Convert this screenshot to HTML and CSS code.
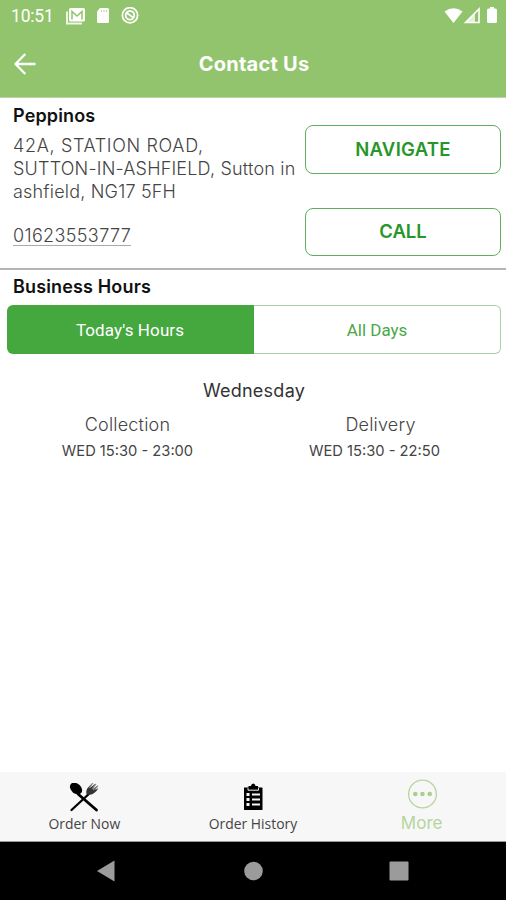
FILE: index.html
```html
<!DOCTYPE html>
<html lang="en">
<head>
<meta charset="utf-8">
<title>Contact Us</title>
<link rel="stylesheet" href="styles.css">
</head>
<body>
<div class="screen">
  <header class="header">
    <div class="status">
      <span class="clock">10:51</span>
      <svg class="status-left" width="76" height="20" viewBox="0 0 76 20">
        <path d="M2 4.500v12h15" fill="none" stroke="#fff" stroke-width="2" opacity=".85"/>
        <rect x="4" y="1" width="16" height="13.500" rx="1.500" fill="#fff"/>
        <path d="M7 12.500V4.500l5 4.500L17 4.500v8" fill="none" stroke="#91c46c" stroke-width="1.500"/>
        <path d="M35 1h7.500q1.500 0 1.500 1.500v12q0 1.500-1.500 1.500h-9q-1.500 0-1.500-1.500V4.500z" fill="#fff"/>
        <path d="M36.500 3v2M39 3v2M41.500 3v2" stroke="#b4d79a"/>
        <circle cx="65" cy="8.300" r="7.600" fill="none" stroke="#fff" stroke-width="1.800"/>
        <circle cx="65" cy="8.300" r="4.300" fill="none" stroke="#fff" stroke-width="1.800"/>
        <path d="M61.500 5.800l7 5" stroke="#fff" stroke-width="1.800"/>
      </svg>
      <svg class="status-right" width="56" height="18" viewBox="0 0 56 18">
        <path d="M.5 4.500Q9.500-2 18.500 4.500L9.500 16z" fill="#fff"/>
        <path d="M21.500 15.500L35 2v13.500z" fill="none" stroke="#fff" stroke-width="1.600"/>
        <path d="M21 16L31 6v10z" fill="#fff" opacity=".75"/>
        <path d="M46 1.500V0h4v1.500h1.500q1.500 0 1.500 1.500v11.500q0 1.500-1.500 1.500h-7q-1.500 0-1.500-1.500V3q0-1.500 1.500-1.500z" fill="#fff"/>
      </svg>
    </div>
    <div class="toolbar">
      <svg class="back" width="24" height="24" viewBox="0 0 24 24"><path d="M13.300 2L3.500 12l9.800 10M4 12H23.500" fill="none" stroke="#fff" stroke-width="2.300"/></svg>
      <h1 class="title">Contact Us</h1>
    </div>
  </header>
  <section class="contact">
    <div class="details">
      <h2 class="heading">Peppinos</h2>
      <p class="address"><span class="street">42A, STATION ROAD,</span><br>SUTTON-IN-ASHFIELD, Sutton in<br>ashfield, NG17 5FH</p>
      <a class="phone">01623553777</a>
    </div>
    <div class="actions">
      <button class="action nav-action">NAVIGATE</button>
      <button class="action">CALL</button>
    </div>
  </section>
  <section class="hours">
    <h2 class="heading hours-heading">Business Hours</h2>
    <div class="tabs">
      <div class="tab active">Today's Hours</div>
      <div class="tab all">All Days</div>
    </div>
    <p class="day">Wednesday</p>
    <div class="times">
      <div class="slot"><p class="kind">Collection</p><p class="time">WED 15:30 - 23:00</p></div>
      <div class="slot"><p class="kind kind-delivery">Delivery</p><p class="time time-delivery">WED 15:30 - 22:50</p></div>
    </div>
  </section>
  <nav class="bottom">
    <div class="item order-now">
      <svg width="32" height="30" viewBox="0 0 32 30">
        <path d="M10 11L28.500 27" stroke="#000" stroke-width="2.800" stroke-linecap="round"/>
        <path d="M3.500 27L23 9" stroke="#000" stroke-width="2.300" stroke-linecap="round"/>
        <ellipse cx="8" cy="5.500" rx="6.900" ry="4.900" transform="rotate(42 8 5.500)"/>
        <path d="M18.500 11.500q-1-5 2-7.500l4-4-2.500 5L27.500.5 24.500 6 30 2.500l-3 4.500 3.500-2q-2 4-5 5.500-3 2-7 1z" fill="#333"/>
        <path d="M25 0l-4 5M28 1l-4 5M30 3l-5 4" stroke="#888" stroke-width="1.100"/>
      </svg><span>Order Now</span>
    </div>
    <div class="item order-history">
      <svg width="32" height="30" viewBox="0 0 32 30">
        <path d="M7 4.500h4.500V3H14Q14.300.5 16.200.5T18.500 3H21v1.500h4q.5 0 .5.500v21.500q0 .5-.5.500H7.500q-.5 0-.5-.5z"/>
        <path d="M11 5.200v2h10.500v-2" fill="none" stroke="#f7f7f7"/>
        <path d="M9.500 11.500h3M9.500 16.500h3M9.500 21.500h3" stroke="#f7f7f7" stroke-width="3"/>
        <path d="M15 11.500h8M15 16.500h8M15 21.500h8" stroke="#f7f7f7" stroke-width="1.800"/>
      </svg><span>Order History</span>
    </div>
    <div class="item more">
      <svg width="30" height="30" viewBox="0 0 30 30"><circle cx="15.500" cy="15" r="13.900" fill="none" stroke="#b5d69d" stroke-width="1.300"/><g fill="#a9cf8e"><circle cx="8.300" cy="15" r="2.300"/><circle cx="15.500" cy="15" r="2.300"/><circle cx="22.700" cy="15" r="2.300"/></g></svg><span>More</span>
    </div>
  </nav>
  <div class="system">
    <svg width="506" height="58" viewBox="0 0 506 58" fill="#9b9b9b"><path d="M97 29L114.500 18.500v21z"/><circle cx="253.500" cy="29" r="9.300"/><rect x="389.500" y="19.500" width="19" height="19" rx="1"/></svg>
  </div>
</div>
</body>
</html>
```
FILE: styles.css
```css
* { box-sizing: border-box; }
body, h1, h2, p { margin: 0; }
body { background: #fff; font-family: Inter, "Liberation Sans", sans-serif; color: #111; }
.screen { width: 506px; height: 900px; display: flex; flex-direction: column; overflow: hidden; white-space: nowrap; }
.header { height: 98px; background: #91c46c; border-bottom: 1px solid #b9d3a7; color: #fff; flex: none; }
.status { height: 32px; display: flex; align-items: flex-start; padding: 7px 9px 0 11px; }
.clock { font: 400 17.500px/19px Roboto, sans-serif; width: 54px; letter-spacing: -.2px; }
.status-right { margin-left: auto; margin-right: -3px; }
.toolbar { height: 64px; display: grid; grid-template-columns: 40px 1fr 40px; align-items: center; padding: 0 12px; }
.title { font-size: 20px; line-height: 24px; font-weight: 700; text-align: center; letter-spacing: .25px; padding: 0 0 1px 2px; }
.contact { height: 172px; border-bottom: 2px solid #b4b4b4; display: flex; padding: 6px 5px 0 13px; flex: none; }
.details { width: 292px; flex: none; }
.heading { font-size: 18px; line-height: 23px; font-weight: 600; letter-spacing: .15px; }
.address { margin-top: 7px; font-size: 18px; line-height: 23px; font-weight: 300; color: #444; letter-spacing: .19px; }
.street { letter-spacing: .65px; }
.phone { display: inline-block; margin-top: 23px; font-size: 18px; line-height: 19px; font-weight: 300; color: #444; border-bottom: 1px solid #aaa; letter-spacing: .36px; }
.actions { width: 196px; padding-top: 21px; display: flex; flex-direction: column; gap: 34px; }
.action { height: 48.500px; border: 1px solid #5fae5d; border-radius: 8px; background: #fff; color: #27962a; font: 600 18.500px/24px Inter, sans-serif; padding: 0 0 2px; }
.nav-action { letter-spacing: .3px; padding-bottom: 1px; }
.hours { flex: 1; padding: 5px 5px 0 7px; }
.hours-heading { padding-left: 6px; }
.tabs { margin-top: 7px; height: 49px; display: grid; grid-template-columns: 1fr 1fr; }
.tab { height: 49px; font: 400 17px/49px Roboto, sans-serif; text-align: center; color: #4aa747; }
.active { background: #45a83e; color: #fff; border-radius: 6px 0 0 6px; letter-spacing: .1px; line-height: 51px; padding-right: 1px; }
.all { border: 1px solid #a9d1a8; border-left: 0; border-radius: 0 6px 6px 0; }
.day { margin-top: 25px; text-align: center; font-size: 18px; line-height: 23px; color: #333; letter-spacing: .25px; }
.times { display: grid; grid-template-columns: 1fr 1fr; margin-top: 11px; text-align: center; }
.kind { font-size: 18px; line-height: 23px; font-weight: 300; color: #444; letter-spacing: .2px; }
.kind-delivery { padding-left: 6px; }
.time { margin-top: 5px; font-size: 14.700px; line-height: 21px; color: #444; }
.time-delivery { padding-right: 6px; }
.slot { padding-right: 6px; }
.slot + .slot { padding-right: 0; }
.bottom { height: 70px; background: #f7f7f7; display: grid; grid-template-columns: repeat(3, 1fr); border-bottom: 1px solid #999; flex: none; }
.item { display: flex; flex-direction: column; align-items: center; padding-top: 11px; font: 400 13.900px/18px "Open Sans", sans-serif; color: #444; }
.item span { margin-top: 2px; }
.more { padding-top: 7px; font: 400 17px/22px Inter, sans-serif; color: #b5d69d; }
.more span { margin-top: 3px; }
.system { height: 58px; background: #000; flex: none; }
.system svg { display: block; }
```
